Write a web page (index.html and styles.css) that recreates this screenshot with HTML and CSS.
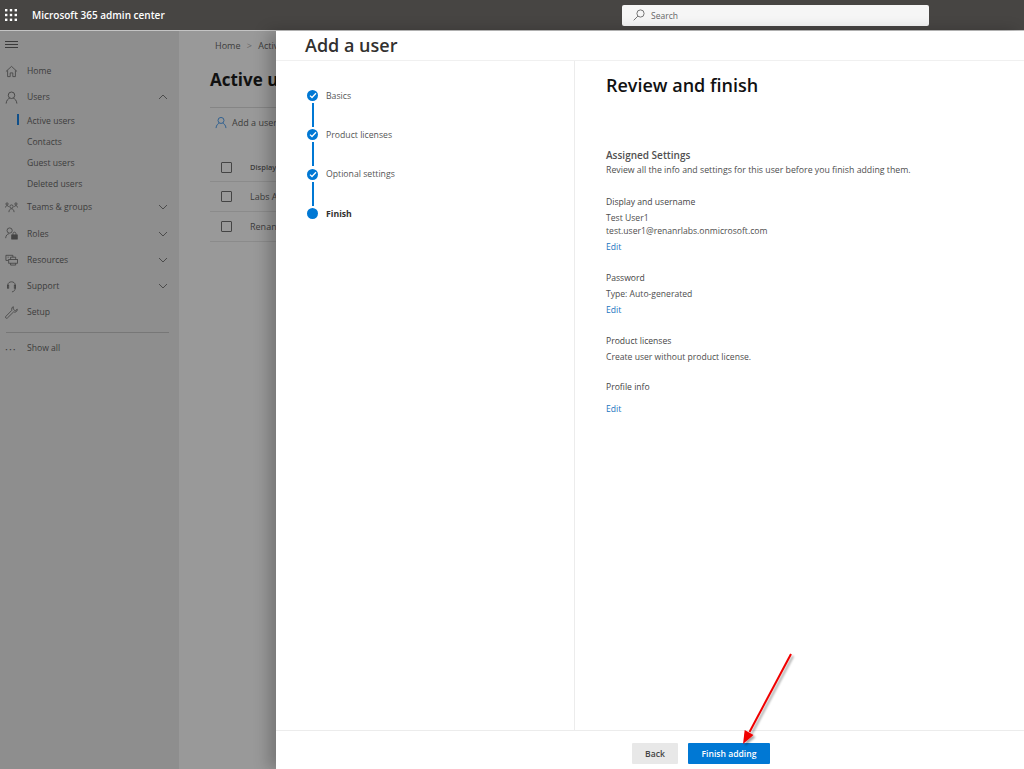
FILE: index.html
```html
<!DOCTYPE html>
<html lang="en">
<head>
  <meta charset="UTF-8" />
  <title>Microsoft 365 admin center</title>
  <link rel="stylesheet" href="styles.css">
</head>
<body>
  <header class="topbar">
    <div class="waffle">
      <svg width="12" height="12" viewBox="0 0 12 12" fill="#fff">
        <rect x="0" y="0" width="2.4" height="2.4"/><rect x="4.8" y="0" width="2.4" height="2.4"/><rect x="9.6" y="0" width="2.4" height="2.4"/>
        <rect x="0" y="4.8" width="2.4" height="2.4"/><rect x="4.8" y="4.8" width="2.4" height="2.4"/><rect x="9.6" y="4.8" width="2.4" height="2.4"/>
        <rect x="0" y="9.6" width="2.4" height="2.4"/><rect x="4.8" y="9.6" width="2.4" height="2.4"/><rect x="9.6" y="9.6" width="2.4" height="2.4"/>
      </svg>
    </div>
    <div class="brand">Microsoft 365 admin center</div>
    <div class="search">
      <svg width="12" height="12" viewBox="0 0 12 12" fill="none" stroke="#666" stroke-width="0.9">
        <circle cx="7.5" cy="4.5" r="3.6"/><path d="M4.9 7.1 0.7 11.3"/>
      </svg>
      <span>Search</span>
    </div>
  </header>

  <div class="shell">
    <nav class="sidebar">
      <div class="burger">
        <svg width="13" height="8" viewBox="0 0 13 8" stroke="#3a3a3a" stroke-width="1"><path d="M0 .5h13M0 3.5h13M0 6.5h13"/></svg>
      </div>
      <a class="nav-item">
        <svg class="nav-icon" viewBox="0 0 14 14" fill="none" stroke="#444" stroke-width="0.9"><path d="M1 7 7 1.5 13 7M2.8 5.8V12.5H5.6V8.5H8.4V12.5H11.2V5.8"/></svg>
        Home
      </a>
      <a class="nav-item">
        <svg class="nav-icon" viewBox="0 0 14 14" fill="none" stroke="#444" stroke-width="1"><circle cx="7" cy="4.6" r="3.5"/><path d="M1.2 13.5C1.5 10 3.5 8.2 5 7.8M12.8 13.5C12.5 10 10.5 8.2 9 7.8"/></svg>
        Users
        <svg class="chev" viewBox="0 0 10 6" fill="none" stroke="#444" stroke-width="0.9"><path d="M1 5 5 1 9 5"/></svg>
      </a>
      <div class="subnav">
        <a class="sub-item active">Active users</a>
        <a class="sub-item">Contacts</a>
        <a class="sub-item">Guest users</a>
        <a class="sub-item">Deleted users</a>
      </div>
      <a class="nav-item">
        <svg class="nav-icon" viewBox="0 0 14 14" fill="none" stroke="#444" stroke-width="0.9"><circle cx="7" cy="6" r="1.8"/><path d="M4.2 12C4.4 9.6 5.5 8.4 7 8.4S9.6 9.6 9.8 12"/><circle cx="2.2" cy="3.2" r="1.2"/><circle cx="11.8" cy="3.2" r="1.2"/><path d="M.5 7C.7 5.6 1.3 5 2.2 5S3.7 5.5 4 6.2M13.5 7C13.3 5.6 12.7 5 11.8 5S10.3 5.5 10 6.2"/></svg>
        Teams &amp; groups
        <svg class="chev" viewBox="0 0 10 6" fill="none" stroke="#444" stroke-width="0.9"><path d="M1 1 5 5 9 1"/></svg>
      </a>
      <a class="nav-item">
        <svg class="nav-icon" viewBox="0 0 14 14" fill="none" stroke="#444" stroke-width="0.9"><circle cx="5" cy="3.8" r="2.8"/><path d="M.7 12C1 9 2.5 7.4 4.5 7.2"/><rect x="7.2" y="8.5" width="6" height="4.5" fill="#444"/><path d="M8.6 8.5V7.2C8.6 5 11.8 5 11.8 7.2V8.5"/></svg>
        Roles
        <svg class="chev" viewBox="0 0 10 6" fill="none" stroke="#444" stroke-width="0.9"><path d="M1 1 5 5 9 1"/></svg>
      </a>
      <a class="nav-item">
        <svg class="nav-icon" viewBox="0 0 14 14" fill="none" stroke="#444" stroke-width="0.9"><path d="M1 8V2.5H8.5V4.5M1 8H3.5M2.8 4.5H4"/><rect x="4" y="7" width="9.5" height="4"/><path d="M6 7V4.5H11.5V7M6 11V13H11.5V11"/></svg>
        Resources
        <svg class="chev" viewBox="0 0 10 6" fill="none" stroke="#444" stroke-width="0.9"><path d="M1 1 5 5 9 1"/></svg>
      </a>
      <a class="nav-item">
        <svg class="nav-icon" viewBox="0 0 14 14" fill="none" stroke="#444" stroke-width="0.9"><path d="M3 8.8V5.5C3 .8 11 .8 11 5.5V8.8C11 11 9.5 12.6 7.5 12.8"/><rect x="2.6" y="5.6" width="1.4" height="3.2"/><rect x="10" y="5.6" width="1.4" height="3.2"/></svg>
        Support
        <svg class="chev" viewBox="0 0 10 6" fill="none" stroke="#444" stroke-width="0.9"><path d="M1 1 5 5 9 1"/></svg>
      </a>
      <a class="nav-item">
        <svg class="nav-icon" viewBox="0 0 14 14" fill="none" stroke="#444" stroke-width="0.9"><path d="M9 .8C7.3 1.2 6.8 3 7.4 4.6L.9 11.2C.4 11.8.4 12.4.9 12.9S2 13.4 2.6 12.9L9.2 6.4C11 7 12.6 6.4 13.1 4.6L13.2 3.4 11 5.2 8.8 3.2Z"/></svg>
        Setup
      </a>
      <div class="nav-rule"></div>
      <a class="nav-item show-all">
        <span class="nav-icon dots">···</span>
        Show all
      </a>
    </nav>

    <main class="content">
      <div class="crumbs">Home <span class="crumb-sep">&gt;</span> Active users</div>
      <h1 class="page-title">Active users</h1>
      <div class="toolbar">
        <svg width="12" height="13" viewBox="0 0 14 14" fill="none" stroke="#2a5d8f" stroke-width="1.1"><circle cx="7" cy="4.6" r="3.5"/><path d="M1.2 13.5C1.5 10 3.5 8.2 5 7.8M12.8 13.5C12.5 10 10.5 8.2 9 7.8"/></svg>
        Add a user
      </div>
      <div class="table-row head"><span class="box"></span><span>Display name</span></div>
      <div class="table-row"><span class="box"></span><span>Labs Admin</span></div>
      <div class="table-row"><span class="box"></span><span>Renan Rodrigues</span></div>
    </main>
  </div>

  <section class="panel">
    <h2 class="panel-title">Add a user</h2>
    <div class="panel-body">
      <ol class="steps">
        <li class="step done">
          <span class="dot"><svg width="8" height="7" viewBox="0 0 8 7" fill="none" stroke="#fff" stroke-width="1.3"><path d="M1 3.6 3 5.5 7 1.2"/></svg></span>
          Basics
        </li>
        <li class="step done">
          <span class="dot"><svg width="8" height="7" viewBox="0 0 8 7" fill="none" stroke="#fff" stroke-width="1.3"><path d="M1 3.6 3 5.5 7 1.2"/></svg></span>
          Product licenses
        </li>
        <li class="step done">
          <span class="dot"><svg width="8" height="7" viewBox="0 0 8 7" fill="none" stroke="#fff" stroke-width="1.3"><path d="M1 3.6 3 5.5 7 1.2"/></svg></span>
          Optional settings
        </li>
        <li class="step current">
          <span class="dot"></span>
          Finish
        </li>
      </ol>
      <div class="review">
        <h3 class="review-title">Review and finish</h3>
        <h4 class="assigned">Assigned Settings</h4>
        <p class="line intro">Review all the info and settings for this user before you finish adding them.</p>

        <h5 class="label first">Display and username</h5>
        <p class="line">Test User1</p>
        <p class="line">test.user1@renanrlabs.onmicrosoft.com</p>
        <a class="edit">Edit</a>

        <h5 class="label">Password</h5>
        <p class="line">Type: Auto-generated</p>
        <a class="edit">Edit</a>

        <h5 class="label">Product licenses</h5>
        <p class="line">Create user without product license.</p>

        <h5 class="label profile">Profile info</h5>
        <a class="edit profile-edit">Edit</a>
      </div>
    </div>
    <footer class="panel-foot">
      <button class="btn back">Back</button>
      <button class="btn primary">Finish adding</button>
    </footer>
  </section>

  <svg class="arrow" width="70" height="100" viewBox="0 0 70 100">
    <defs>
      <filter id="arrow-shadow" x="-30%" y="-10%" width="170%" height="130%">
        <feDropShadow dx="2" dy="2" stdDeviation="1.2" flood-color="#000" flood-opacity="0.35"/>
      </filter>
    </defs>
    <g filter="url(#arrow-shadow)">
      <path d="M60 3 18.5 81" stroke="#f00000" stroke-width="2" fill="none"/>
      <path d="M12 93 13.7 79.1 22.5 83.9Z" fill="#f00000"/>
    </g>
  </svg>
</body>
</html>
```

FILE: styles.css
```css
* {
  box-sizing: border-box;
}
html, body {
  height: 100%;
}
body {
  margin: 0;
  overflow: hidden;
  font-family: "Open Sans", "Noto Sans", sans-serif;
  font-size: 9px;
  color: #333;
  background: #999;
}
h1, h2, h3, h4, h5, p, ol {
  margin: 0;
  padding: 0;
}

/* top bar */
.topbar {
  display: flex;
  align-items: center;
  height: 31px;
  background: #474543;
  border-bottom: 1px solid #c4c4c4;
}
.waffle {
  display: flex;
  width: 32px;
  padding-left: 5px;
}
.brand {
  color: #fff;
  font-size: 10px;
  font-weight: 600;
  width: 590px;
}
.search {
  display: flex;
  align-items: center;
  gap: 6px;
  width: 307px;
  height: 21px;
  padding-left: 11px;
  background: #f6f6f6;
  border-radius: 2px;
  color: #666;
  font-size: 8.5px;
}

/* page behind the panel */
.shell {
  display: flex;
  height: 738px;
}
.sidebar {
  width: 179px;
  flex: none;
  background: #8e8e8e;
  color: #3c3c3c;
  font-size: 8.6px;
}
.burger {
  display: flex;
  align-items: center;
  height: 27px;
  padding-left: 5px;
}
.nav-item {
  display: flex;
  align-items: center;
  height: 26.2px;
  padding-left: 5px;
}
.nav-icon {
  width: 13px;
  height: 13px;
  margin-right: 9px;
  flex: none;
}
.dots {
  font-size: 11px;
  line-height: 13px;
  letter-spacing: 1px;
}
.chev {
  width: 10px;
  height: 6px;
  margin-left: auto;
  margin-right: 11px;
}
.sub-item {
  display: flex;
  align-items: center;
  height: 21px;
  padding-left: 27px;
  position: relative;
}
.active::before {
  content: "";
  position: absolute;
  left: 17px;
  top: 4px;
  width: 2px;
  height: 11px;
  background: #0f4f8a;
}
.nav-rule {
  height: 1px;
  margin: 7px 10px 2px 6px;
  background: #777;
}
.show-all {
  height: 26px;
}
.content {
  flex: 1;
  padding-left: 31px;
  padding-top: 8px;
  overflow: hidden;
  white-space: nowrap;
  color: #3c3c3c;
}
.crumbs {
  font-size: 9px;
  height: 12px;
  padding-left: 5px;
}
.crumb-sep {
  margin: 0 4px;
  color: #666;
}
.page-title {
  font-size: 17px;
  font-weight: 700;
  color: #111;
  margin-top: 17px;
  line-height: 24px;
  height: 39px;
}
.toolbar {
  display: flex;
  align-items: center;
  gap: 5px;
  width: 100%;
  height: 30px;
  padding-left: 5px;
  border-top: 1px solid #858585;
}
.table-row {
  display: flex;
  align-items: center;
  height: 30px;
  padding-left: 11px;
  gap: 18px;
  border-bottom: 1px solid #8b8b8b;
}
.table-row.head {
  margin-top: 16px;
  font-size: 7.5px;
  font-weight: 600;
  height: 29px;
}
.box {
  width: 11px;
  height: 11px;
  border: 1px solid #444;
  border-radius: 1px;
}

/* side panel */
.panel {
  position: absolute;
  left: 276px;
  top: 31px;
  right: 0;
  bottom: 0;
  display: flex;
  flex-direction: column;
  background: #fff;
  box-shadow: -8px 0 14px rgba(0, 0, 0, 0.22);
}
.panel-title {
  height: 30px;
  padding-left: 29px;
  font-size: 18px;
  font-weight: 600;
  line-height: 29px;
  color: #323130;
  border-bottom: 1px solid #f0f0f0;
}
.panel-body {
  flex: 1;
  display: flex;
}
.steps {
  width: 299px;
  flex: none;
  padding: 29px 0 0 31px;
  border-right: 1px solid #ececec;
  list-style: none;
}
.step {
  display: flex;
  align-items: center;
  gap: 8px;
  height: 11px;
  margin-bottom: 28.4px;
  position: relative;
  color: #555;
  font-size: 8.7px;
}
.step.current {
  color: #323130;
  font-weight: 700;
}
.dot {
  display: flex;
  align-items: center;
  justify-content: center;
  width: 11px;
  height: 11px;
  border-radius: 50%;
  background: #0078d4;
  flex: none;
}
.done::before {
  content: "";
  position: absolute;
  left: 4.5px;
  top: 13px;
  width: 2px;
  height: 24px;
  background: #0078d4;
}
.review {
  flex: 1;
  padding: 12px 0 0 31px;
}
.review-title {
  font-size: 18px;
  font-weight: 600;
  line-height: 24px;
  color: #111;
  margin-bottom: 51px;
}
.assigned {
  font-size: 10px;
  font-weight: 600;
  color: #505050;
  line-height: 14px;
  margin-bottom: 2px;
}
.line {
  font-size: 8.6px;
  line-height: 13.5px;
  color: #4e4e4e;
}
.intro {
  font-size: 8.75px;
}
.label {
  font-size: 8.6px;
  font-weight: 500;
  color: #444;
  line-height: 13px;
  margin-top: 18px;
  margin-bottom: 3px;
}
.label.first {
  margin-top: 18px;
}
.edit {
  display: block;
  font-size: 8.6px;
  line-height: 13px;
  color: #1a74c0;
  margin-top: 2.5px;
}
.profile {
  margin-top: 16px;
}
.profile-edit {
  margin-top: 9px;
}
.panel-foot {
  display: flex;
  justify-content: center;
  gap: 10px;
  height: 39px;
  padding: 12px 0 0 102px;
  border-top: 1px solid #ececec;
}
.btn {
  height: 21px;
  border: none;
  border-radius: 1px;
  font-family: inherit;
  font-size: 8.6px;
  font-weight: 600;
  padding: 0;
}
.back {
  width: 46px;
  background: #e8e8e8;
  color: #444;
}
.primary {
  width: 82px;
  background: #0078d4;
  color: #fff;
}

/* annotation arrow */
.arrow {
  position: absolute;
  left: 731px;
  top: 651px;
}
```
